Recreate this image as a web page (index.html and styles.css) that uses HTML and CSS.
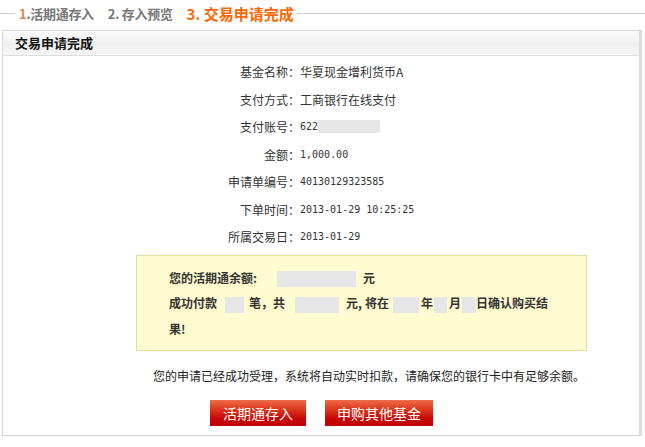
FILE: index.html
```html
<!DOCTYPE html>
<html lang="zh-CN">
<head>
    <meta charset="UTF-8">
    <meta name="viewport" content="width=device-width, initial-scale=1.0">
    <title>交易申请完成</title>
    <link rel="stylesheet" href="styles.css">
</head>
<body>
    <div class="steps">
        <span class="steps-line short"></span>
        <span class="step"><span class="step-num">1</span>.活期通存入</span>
        <span class="step">2. 存入预览</span>
        <span class="step current">3. 交易申请完成</span>
        <span class="steps-line"></span>
    </div>

    <div class="panel">
        <div class="panel-head">交易申请完成</div>

        <div class="info">
            <div class="label">基金名称：</div>
            <div class="value">华夏现金增利货币A</div>
            <div class="label">支付方式：</div>
            <div class="value">工商银行在线支付</div>
            <div class="label">支付账号：</div>
            <div class="value num">622<span class="mask mask-account"></span></div>
            <div class="label">金额：</div>
            <div class="value num">1,000.00</div>
            <div class="label">申请单编号：</div>
            <div class="value num">40130129323585</div>
            <div class="label">下单时间：</div>
            <div class="value num">2013-01-29 10:25:25</div>
            <div class="label">所属交易日：</div>
            <div class="value num">2013-01-29</div>
        </div>

        <div class="notice">
            <p>您的活期通余额:<span class="mask w79 ml20"></span><span class="ml7">元</span></p>
            <p>成功付款<span class="mask w19 ml8"></span><span class="ml5">笔，共</span><span class="mask w44 ml10"></span><span class="ml7">元,</span><span class="ml3">将在</span><span class="mask w26 ml4"></span><span class="ml2">年</span><span class="mask w13 ml1"></span><span class="ml2">月</span><span class="mask w14 ml1"></span>日确认购买结<br>果!</p>
        </div>

        <p class="message">您的申请已经成功受理，系统将自动实时扣款，请确保您的银行卡中有足够余额。</p>

        <div class="actions">
            <button class="btn btn-save">活期通存入</button>
            <button class="btn btn-other">申购其他基金</button>
        </div>
    </div>
</body>
</html>
```

FILE: styles.css
```css
body {
    margin: 0;
    padding: 0;
    font-family: "Noto Sans CJK SC", "Liberation Sans", sans-serif;
    font-size: 12px;
    color: #333;
    background-color: #fff;
}
p {
    margin: 0;
}

/* step bar */
.steps {
    display: flex;
    align-items: center;
    height: 26px;
    margin-bottom: 4px;
}
.steps-line {
    flex: 1;
    height: 1px;
    background-color: #ccc;
}
.steps-line.short {
    flex: none;
    width: 15px;
    margin-right: 4px;
}
.step {
    font-size: 13px;
    font-weight: bold;
    color: #777;
    margin-right: 14px;
    letter-spacing: -0.3px;
}
.step-num {
    color: #d08a4a;
}
.step.current {
    font-size: 15px;
    color: #f60;
    margin-right: 3px;
    letter-spacing: 0;
}

/* panel */
.panel {
    margin: 0 3px 0 2px;
    border: 1px solid #d6d6d6;
    border-right: 3px solid #ddd;
    padding-bottom: 9px;
}
.panel-head {
    height: 24px;
    line-height: 24px;
    padding-left: 12px;
    font-size: 13px;
    font-weight: bold;
    color: #111;
    background: linear-gradient(#fbfbfb, #efefef 55%, #f6f6f6);
    border-bottom: 1px solid #ddd;
}

.info {
    display: grid;
    grid-template-columns: 297px 1fr;
    grid-auto-rows: 27.5px;
    align-items: center;
    padding-top: 2px;
}
.label {
    text-align: right;
}
.value {
    display: flex;
    align-items: center;
}
.num {
    font-family: "DejaVu Sans Mono", monospace;
    font-size: 10px;
    white-space: pre;
}
.mask {
    display: inline-block;
    height: 16px;
    background-color: #e6e6e6;
    vertical-align: middle;
}
.mask-account {
    width: 62px;
    height: 13px;
}

/* yellow notice */
.notice {
    width: 451px;
    box-sizing: border-box;
    margin: 4px 0 0 133px;
    padding: 9px 20px 9px 32px;
    background-color: #fefbd0;
    border: 1px solid #e7dd9f;
    font-weight: bold;
    line-height: 25.5px;
}
.w79 { width: 79px; }
.w44 { width: 44px; }
.w26 { width: 26px; }
.w19 { width: 19px; }
.w14 { width: 14px; }
.w13 { width: 13px; }
.ml1 { margin-left: 1px; }
.ml2 { margin-left: 2px; }
.ml3 { margin-left: 3px; }
.ml4 { margin-left: 4px; }
.ml5 { margin-left: 5px; }
.ml7 { margin-left: 7px; }
.ml8 { margin-left: 8px; }
.ml10 { margin-left: 10px; }
.ml20 { margin-left: 20px; }

.message {
    margin: 13px 0 0 150px;
    line-height: 24px;
    color: #222;
}

.actions {
    display: flex;
    gap: 19px;
    margin: 12px 0 0 207px;
}
.btn {
    height: 26px;
    padding: 0;
    font-family: inherit;
    font-size: 14px;
    color: #fff;
    border: none;
    background: linear-gradient(#ee6c48, #dc3a1e 35%, #c80808 70%, #c00000);
    cursor: pointer;
}
.btn-save {
    width: 96px;
}
.btn-other {
    width: 108px;
}
.btn:hover {
    background: #c00;
}
```
